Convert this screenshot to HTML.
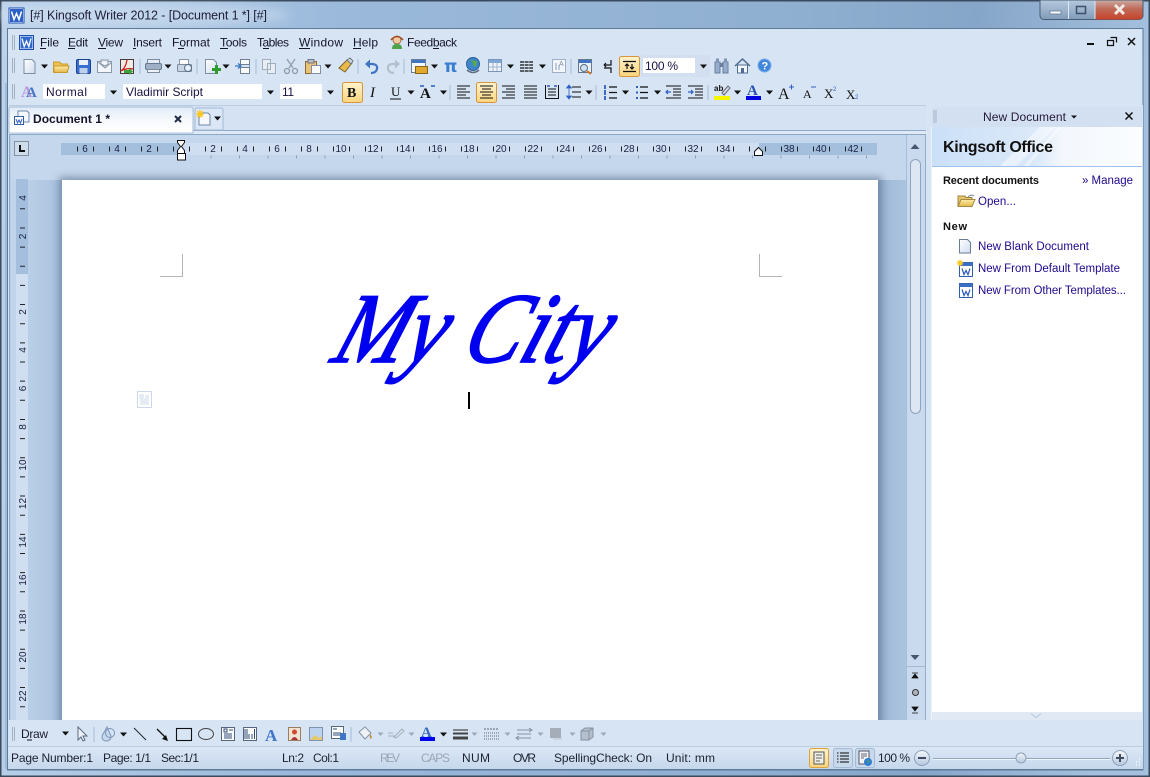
<!DOCTYPE html>
<html><head><meta charset="utf-8"><title>Kingsoft Writer 2012</title>
<style>
html,body{margin:0;padding:0;width:1150px;height:777px;overflow:hidden;background:#9bb9d9}
svg{display:block;position:absolute;left:0;top:0}
text{font-family:"Liberation Sans",sans-serif;font-size:12px;fill:#14142c}
.r{font-size:10px;fill:#1a2040;text-anchor:middle}
.l{fill:#1c0a8c}
.b{font-weight:bold;fill:#000}
.s{fill:#1c2030}
.g{fill:#9aa6b8}
.sep{stroke:#a9bcd4;stroke-width:1}
</style></head><body>
<svg width="1150" height="777" viewBox="0 0 1150 777" xmlns="http://www.w3.org/2000/svg">
<defs>
<linearGradient id="fr" x1="0" x2="1" y1="0" y2="0.05"><stop offset="0" stop-color="#bcd2ea"/><stop offset=".3" stop-color="#9ab9db"/><stop offset=".7" stop-color="#8fafd1"/><stop offset=".85" stop-color="#86a6c9"/><stop offset="1" stop-color="#a4c0de"/></linearGradient>
<linearGradient id="dl" x1="0" x2="1" y1="0" y2="0"><stop offset="0" stop-color="#c3d6ec"/><stop offset=".75" stop-color="#b0c7e2"/><stop offset="1" stop-color="#a6bfdc"/></linearGradient>
<linearGradient id="dr" x1="0" x2="1" y1="0" y2="0"><stop offset="0" stop-color="#9ab4d2"/><stop offset=".5" stop-color="#a5bedb"/><stop offset="1" stop-color="#aac3df"/></linearGradient>
<linearGradient id="hl" x1="0" x2="0" y1="0" y2="1"><stop offset="0" stop-color="#fff3cf"/><stop offset="1" stop-color="#fcd57e"/></linearGradient>
<linearGradient id="tab" x1="0" x2="0" y1="0" y2="1"><stop offset="0" stop-color="#dfeaf8"/><stop offset=".5" stop-color="#f6f9fd"/><stop offset="1" stop-color="#fff"/></linearGradient>
<linearGradient id="pt" x1="0" x2="1" y1="0" y2="0"><stop offset="0" stop-color="#cbe0f8"/><stop offset=".5" stop-color="#dbe9f9"/><stop offset=".62" stop-color="#f3f7fd"/><stop offset="1" stop-color="#fbfdff"/></linearGradient>
<linearGradient id="st" x1="0" x2="0" y1="0" y2="1"><stop offset="0" stop-color="#dbe7f5"/><stop offset="1" stop-color="#c5d7ec"/></linearGradient>
<linearGradient id="min" x1="0" x2="0" y1="0" y2="1"><stop offset="0" stop-color="#b4c8dd"/><stop offset=".5" stop-color="#9cb3cc"/><stop offset="1" stop-color="#7f9ab8"/></linearGradient>
<linearGradient id="cl" x1="0" x2="0" y1="0" y2="1"><stop offset="0" stop-color="#c9a8a0"/><stop offset=".45" stop-color="#c06a58"/><stop offset="1" stop-color="#c8422a"/></linearGradient>
<linearGradient id="fo" x1="0" x2="0" y1="0" y2="1"><stop offset="0" stop-color="#fdeeaa"/><stop offset="1" stop-color="#e4b545"/></linearGradient>
<linearGradient id="pa" x1="0" x2="1" y1="0" y2="1"><stop offset="0" stop-color="#fff"/><stop offset="1" stop-color="#cfdcef"/></linearGradient>
<linearGradient id="kn" x1="0" x2="0" y1="0" y2="1"><stop offset="0" stop-color="#f4f7fb"/><stop offset="1" stop-color="#b6c8de"/></linearGradient>
<filter id="bl" x="-10%" y="-10%" width="120%" height="120%"><feGaussianBlur stdDeviation="5"/></filter>
<filter id="bs" x="-5%" y="-5%" width="110%" height="110%"><feGaussianBlur stdDeviation="4"/></filter>
<path id="ar" d="M-3.5 -1.5h7l-3.500 4z" fill="#111"/>
<path id="arg" d="M-3 -1.500h6l-3 3.500z" fill="#9aa9bc"/>
<g id="wd"><rect x="0" y="0" width="13" height="14" fill="#fff" stroke="#2f5fa8"/><rect x="0" y="0" width="13" height="3.500" fill="#3a70c4"/><path d="M2.500 6l2 6 2-4 2 4 2-6" fill="none" stroke="#2a5cc0" stroke-width="1.200"/></g>
</defs>

<!-- frame -->
<rect width="1150" height="777" fill="url(#fr)"/>
<rect x="0" y="0" width="1150" height="1.500" fill="#3b4a5c"/>
<rect x="0" y="0" width="1.500" height="777" fill="#3b4a5c"/>
<rect x="1148.500" y="0" width="1.500" height="777" fill="#3b4a5c"/>
<rect x="0" y="775.500" width="1150" height="1.500" fill="#3b4a5c"/>
<ellipse cx="140" cy="15" rx="150" ry="12" fill="#dbe8f5" opacity=".45" filter="url(#bl)"/>

<!-- title -->
<rect x="9" y="8" width="15" height="15" fill="#fff" stroke="#1c4fb0"/>
<rect x="10" y="9" width="13" height="13" fill="#2a60c8"/>
<path d="M11.500 11.500l2.500 8 2.500-6 2.500 6 2.500-8" fill="none" stroke="#fff" stroke-width="1.500"/>
<text x="30" y="19.500" style="font-size:12.500px;fill:#20203a" textLength="237">[#] Kingsoft Writer 2012 - [Document 1 *] [#]</text>

<!-- window buttons -->
<g>
<path d="M1040 0h103v15a4 4 0 0 1-4 4.500h-95a4 4 0 0 1-4-4.500z" fill="url(#min)" stroke="#4a5d72"/>
<path d="M1095.500 .5h47v15a4 4 0 0 1-4 4h-43z" fill="url(#cl)"/>
<path d="M1068.500 1v18M1095 1v18" stroke="#dfe8f2" stroke-width="1"/>
<rect x="1050" y="11" width="11" height="3" fill="#f3f6fa" stroke="#5f7488" stroke-width=".7"/>
<rect x="1076.500" y="6.500" width="9" height="7" fill="none" stroke="#3d5068" stroke-width="1.500"/>
<path d="M1115 5l9 9M1124 5l-9 9" stroke="#f0e8e4" stroke-width="3"/>
</g>

<!-- client -->
<rect x="7.500" y="28.500" width="1135.500" height="741.500" fill="#d6e4f4" stroke="#5f7a96"/>
<rect x="5" y="83" width="2" height="686" fill="#8cadd2" opacity=".6"/>

<!-- menu row -->
<path d="M12.500 35v15M14.500 35v15M12.500 58v15M14.500 58v15M12.500 84v15M14.500 84v15" stroke="#a2b2c6" stroke-width="1"/>
<rect x="19.500" y="35.500" width="14" height="14" fill="#fff" stroke="#1c4fb0"/>
<rect x="20.500" y="36.500" width="12" height="12" fill="#3168cc"/>
<path d="M22 38.500l2.200 8 2.300-5.500 2.300 5.500 2.200-8" fill="none" stroke="#fff" stroke-width="1.300"/>
<g>
<text x="40" y="46.500" textLength="19">File</text>
<text x="68" y="46.500" textLength="20">Edit</text>
<text x="98" y="46.500" textLength="25">View</text>
<text x="133" y="46.500" textLength="29">Insert</text>
<text x="172" y="46.500" textLength="38">Format</text>
<text x="220" y="46.500" textLength="27">Tools</text>
<text x="257" y="46.500" textLength="32">Tables</text>
<text x="299" y="46.500" textLength="44">Window</text>
<text x="353" y="46.500" textLength="25">Help</text>
<text x="407" y="46.500" textLength="50">Feedback</text>
</g>
<path d="M40 48.500h6M68 48.500h7M98 48.500h8M133 48.500h3M178 48.500h6M220 48.500h8M263 48.500h6M299 48.500h11M353 48.500h8M433 48.500h6" stroke="#14142c"/>
<!-- feedback icon -->
<circle cx="397" cy="40" r="4" fill="#f3c9a0" stroke="#8a5a30" stroke-width=".8"/>
<path d="M392 49c0-4 2-5 5-5s5 1 5 5z" fill="#4fa34a"/><path d="M391 40q6-7 12 0" fill="none" stroke="#a54a20" stroke-width="1.500"/>
<!-- MDI controls -->
<rect x="1087" y="43" width="7" height="2" fill="#111"/>
<path d="M1110.500 37.500h6v5M1107.500 40.500h6v5h-6z" fill="none" stroke="#111" stroke-width="1.200"/>
<path d="M1128 38l7 7M1135 38l-7 7" stroke="#111" stroke-width="1.500"/>

<!-- row 1 -->
<g id="r1">
<path d="M24 59.500h8l3 3v11h-11z" fill="url(#pa)" stroke="#7e8ea4"/>
<use href="#ar" x="44.500" y="66"/>
<path d="M53.500 62h6l2 2h6v8h-14z" fill="#edc14f" stroke="#c99a2d"/><path d="M54 66h15l-2 6.500h-13z" fill="url(#fo)" stroke="#c99a2d"/>
<rect x="76.500" y="59.500" width="14" height="14" rx="1.500" fill="#3a6ed0" stroke="#1c3f8e"/><rect x="79" y="60" width="9" height="5" fill="#e8eff9"/><rect x="79.500" y="68" width="8" height="5.500" fill="#bfd0ea"/>
<rect x="97.500" y="61.500" width="14" height="11" fill="#f3f6fa" stroke="#8998ab"/><path d="M98 62l7 6 7-6M101 60h7v4l-3 2-4-2z" fill="#e4eaf2" stroke="#8998ab"/>
<rect x="120.500" y="59.500" width="13" height="14" fill="#f0ece4" stroke="#4a3c3c"/><path d="M127 60c-1 6-3 9-6 11 3-2 8-3 12-2" fill="none" stroke="#d01818" stroke-width="1.200"/><path d="M124 70h5v-2l4 3.500-4 3.500v-2h-5z" fill="#39a33a"/>
<path class="sep" d="M140 59v15"/>
<rect x="147.500" y="59.500" width="12" height="4" fill="#e6ecf3" stroke="#7d8ca0"/><rect x="145.500" y="63.500" width="16" height="6" rx="1.500" fill="#9fb0c6" stroke="#667990"/><rect x="147.500" y="69.500" width="12" height="3" fill="#eef2f7" stroke="#7d8ca0"/>
<use href="#ar" x="168" y="66"/>
<rect x="179.500" y="59.500" width="9" height="6" fill="#fff" stroke="#8495aa"/><rect x="177.500" y="64.500" width="14" height="7" rx="1" fill="#c9d5e4" stroke="#7a8ba0"/><circle cx="188" cy="68" r="3.500" fill="#e6f0fb" stroke="#5b6f88"/>
<path class="sep" d="M197 59v15"/>
<path d="M205.500 59.500h8l3 3v11h-11z" fill="url(#pa)" stroke="#7e8ea4"/><path d="M212 68h3v-3h3v3h3v3h-3v3h-3v-3h-3z" fill="#2f9b2f"/>
<use href="#ar" x="226" y="66"/>
<path d="M240.500 59.500h9v5h-9zM240.500 67.500h9v6h-9z" fill="#fbfcfe" stroke="#6e7e94"/><path d="M235 66h6M238 63.500l3 2.500-3 2.500M250 66h-1" fill="none" stroke="#3a78c8" stroke-width="1.300"/>
<path class="sep" d="M256 59v15"/>
<path d="M262.500 59.500h8v10h-8zM267.500 63.500h8v10h-8z" fill="#e8edf4" stroke="#a3aebd"/>
<path d="M287 59l6 9M295 59l-6 9" stroke="#98a3b2" stroke-width="1.500"/><circle cx="287" cy="71" r="2.500" fill="none" stroke="#8c99aa" stroke-width="1.300"/><circle cx="295" cy="71" r="2.500" fill="none" stroke="#8c99aa" stroke-width="1.300"/>
<rect x="305.500" y="61.500" width="11" height="12" fill="#e8c277" stroke="#8e6c30"/><rect x="308" y="59.500" width="6" height="3.500" fill="#b7bec8" stroke="#6d7786"/><rect x="311.500" y="65.500" width="9" height="8" fill="#f8fafc" stroke="#7e8ea4"/>
<use href="#ar" x="328" y="66"/>
<path d="M339 68l8-8 5 3-7 9z" fill="#e8b84a" stroke="#7d6628"/><path d="M347 60l3-2 3 3-2 3z" fill="#cfd6de" stroke="#6c7684"/>
<path class="sep" d="M358 59v15"/>
<path d="M367 64h6q5 1 4 5t-6 4" fill="none" stroke="#3f74c4" stroke-width="2.200"/><path d="M370 59.500v9l-5-4.500z" fill="#3f74c4"/>
<path d="M398 64h-6q-5 1-4 5t6 4" fill="none" stroke="#b4bfcc" stroke-width="2.200"/><path d="M395 59.500v9l5-4.500z" fill="#b4bfcc"/>
<path class="sep" d="M404 59v15"/>
<rect x="411.500" y="59.500" width="14" height="13" fill="#f4f7fb" stroke="#6b7f98"/><rect x="412" y="60" width="13" height="3" fill="#3e74c2"/><rect x="415.500" y="66.500" width="12" height="7" fill="#e0a82e" stroke="#8a6416"/>
<use href="#ar" x="434.500" y="66"/>
<text x="444" y="72" style="font-family:'DejaVu Sans',sans-serif;font-size:17px;font-weight:bold;fill:#3a7ed0" textLength="14">π</text>
<circle cx="473" cy="64" r="6.500" fill="#3d86c9" stroke="#2c5e94"/><path d="M469 60q4 1 4 4t3 2l1-5" fill="#5aa84a"/><path d="M467 70q6 5 12 0" fill="none" stroke="#5d6c80" stroke-width="1.500"/>
<rect x="488.500" y="59.500" width="13" height="12" fill="#eef3fa" stroke="#7c94b5"/><rect x="489" y="60" width="12" height="3" fill="#7fa8da"/><path d="M493 63v8M497 63v8M489 67h12" stroke="#9eb4d0"/>
<use href="#ar" x="510.500" y="66"/>
<path d="M520 62h13M520 65h13M520 68h13M520 71h13" stroke="#111" stroke-width="1.300" stroke-dasharray="4 .6"/>
<use href="#ar" x="542.500" y="66"/>
<rect x="552.500" y="59.500" width="13" height="13" fill="#f3f6fb" stroke="#9fb0c6"/><path d="M556 63v7M559 65v5" stroke="#8aa0be"/><text x="559" y="66" style="font-size:7px;fill:#7d8da2">A</text>
<path class="sep" d="M571 59v15"/>
<rect x="578.500" y="59.500" width="13" height="13" fill="#eaf0f8" stroke="#64788f"/><rect x="579" y="60" width="12" height="3" fill="#3e74c2"/><circle cx="584" cy="68" r="3.500" fill="#cfe2f1" stroke="#5b6f88"/><path d="M587 71l4 3" stroke="#d9761d" stroke-width="2"/>
<path d="M611 60v5h-7M604 65l2-2M604 65l2 2M604 68h7v5M611 68l-2 0" fill="none" stroke="#111" stroke-width="1.200"/>
<rect x="619.500" y="56.500" width="20" height="20" rx="2" fill="url(#hl)" stroke="#d8953a"/>
<path d="M623 61.500h13M623 71.500h13M627 64v5M632 64v5M625 66l2-2 2 2M630 67l2 2 2-2" fill="none" stroke="#111" stroke-width="1.200"/>
<rect x="641" y="55" width="69" height="22" fill="#d3dff0"/>
<rect x="643" y="58" width="52" height="15" fill="#fff"/>
<text x="645" y="70" textLength="33" style="fill:#1a1240">100 %</text>
<use href="#ar" x="703.500" y="66"/>
<path d="M715 62h5v11h-5zM723 62h5v11h-5z" fill="#97add0" stroke="#697e9c"/><rect x="716" y="58.500" width="3" height="4" fill="#7e95b8"/><rect x="724" y="58.500" width="3" height="4" fill="#7e95b8"/><rect x="720" y="63" width="3" height="4" fill="#6b7f9c"/>
<path d="M735 66l7.500-7 7.500 7" fill="none" stroke="#4f6c92" stroke-width="1.500"/><path d="M737.500 65v8h10v-8z" fill="#f3f6fa" stroke="#4f6c92"/><rect x="741" y="68" width="3" height="5" fill="#4f6c92"/>
<circle cx="764.500" cy="65.500" r="6.500" fill="#3f86dc" stroke="#7eaee8"/><text x="761.500" y="69.500" style="font-size:11px;font-weight:bold;fill:#fff">?</text>
</g>

<!-- row 2 -->
<g id="r2">
<text x="21" y="97" style="font-family:'Liberation Serif',serif;font-size:16px;font-weight:bold;fill:#b89ad8">A</text><text x="26" y="97" style="font-family:'Liberation Serif',serif;font-size:15px;font-weight:bold;fill:#4a78c8">A</text>
<rect x="43" y="84" width="62" height="15" fill="#fff"/>
<text x="46" y="96" textLength="41" style="fill:#1a1240">Normal</text>
<use href="#ar" x="113.500" y="92"/>
<rect x="123" y="84" width="139" height="15" fill="#fff"/>
<text x="126" y="96" textLength="77" style="fill:#1a1240">Vladimir Script</text>
<use href="#ar" x="270.500" y="92"/>
<rect x="280" y="84" width="42" height="15" fill="#fff"/>
<text x="282" y="96" textLength="12" style="fill:#1a1240">11</text>
<use href="#ar" x="330.500" y="92"/>
<rect x="342.500" y="82.500" width="20" height="20" rx="2" fill="url(#hl)" stroke="#d8953a"/>
<text x="347" y="97" style="font-family:'Liberation Serif',serif;font-size:14px;font-weight:bold;fill:#111">B</text>
<text x="370" y="97" style="font-family:'Liberation Serif',serif;font-size:15px;font-style:italic;fill:#111">I</text>
<text x="391" y="96" style="font-family:'Liberation Serif',serif;font-size:13px;fill:#111">U</text><path d="M390 99h11" stroke="#111"/>
<use href="#ar" x="411" y="92"/>
<text x="420" y="98" style="font-family:'Liberation Serif',serif;font-size:15px;font-weight:bold;fill:#111">A</text><path d="M420 86h4M431 86h4" stroke="#2d5fbf" stroke-width="1.500"/>
<use href="#ar" x="443.500" y="92"/>
<path class="sep" d="M450 85v15"/>
<path d="M457 86h13M457 89h9M457 92h13M457 95h9M457 98h13" stroke="#111"/>
<rect x="476.500" y="82.500" width="20" height="20" rx="2" fill="url(#hl)" stroke="#d8953a"/>
<path d="M480 86h13M482 89h9M480 92h13M482 95h9M480 98h13" stroke="#111"/>
<path d="M502 86h13M506 89h9M502 92h13M506 95h9M502 98h13" stroke="#111"/>
<path d="M524 86h13M524 89h13M524 92h13M524 95h13M524 98h13" stroke="#111"/>
<path d="M545.500 85v14M558.500 85v14M548 89h8M548 92h8M548 95h8M545 98.500h14" stroke="#111"/><path d="M547 86h3M554 86h3" stroke="#2d5fbf" stroke-width="1.500"/>
<path d="M572 87h9M572 92h9M572 97h9" stroke="#111"/><path d="M569 85l-2.500 3h5zM569 99l-2.500-3h5zM569 88v8" fill="#2d5fbf" stroke="#2d5fbf" stroke-width=".8"/>
<use href="#ar" x="589" y="92"/>
<path class="sep" d="M596 85v15"/>
<path d="M609 87h8M609 92.500h8M609 98h8" stroke="#111" stroke-width="1.200"/><path d="M605 85v4M605 90v5M605 96v4" stroke="#2d5fbf" stroke-width="1.800"/>
<use href="#ar" x="625.500" y="92"/>
<path d="M640 87h8M640 92.500h8M640 98h8" stroke="#111" stroke-width="1.200"/><path d="M636 87h2M636 92.500h2M636 98h2" stroke="#2d5fbf" stroke-width="2"/>
<use href="#ar" x="657.500" y="92"/>
<path d="M666 86h15M673 89h8M673 92h8M673 95h8M666 98h15" stroke="#111"/><path d="M671 92h-5M668 90l-2 2 2 2" fill="none" stroke="#2d5fbf" stroke-width="1.200"/>
<path d="M688 86h15M695 89h8M695 92h8M695 95h8M688 98h15" stroke="#111"/><path d="M688 92h5M691 90l2 2-2 2" fill="none" stroke="#2d5fbf" stroke-width="1.200"/>
<path class="sep" d="M708 85v15"/>
<text x="714" y="91" style="font-size:8px;font-weight:bold;fill:#111">ab</text>
<path d="M722 93l6-7 2 2-6 7z" fill="#d8dfe8" stroke="#667"/>
<rect x="714" y="96" width="16" height="4" fill="#f5f500"/>
<use href="#ar" x="737.500" y="92"/>
<text x="747" y="95" style="font-family:'Liberation Serif',serif;font-size:15px;font-weight:bold;fill:#2a4fb0">A</text><rect x="746" y="96" width="15" height="4" fill="#0000e0"/>
<use href="#ar" x="769.500" y="92"/>
<text x="778" y="99" style="font-family:'Liberation Serif',serif;font-size:16px;fill:#111">A</text><path d="M789 87h5M791.500 84.500v5" stroke="#2d5fbf"/>
<text x="803" y="98" style="font-family:'Liberation Serif',serif;font-size:12px;fill:#111">A</text><path d="M811 87h5" stroke="#2d5fbf"/>
<text x="824" y="98" style="font-family:'Liberation Serif',serif;font-size:13px;fill:#111">X</text><text x="833" y="91" style="font-size:6px;fill:#2d5fbf">2</text>
<text x="846" y="99" style="font-family:'Liberation Serif',serif;font-size:13px;fill:#111">X</text><text x="855" y="99" style="font-size:6px;fill:#2d5fbf">2</text>
</g>

<!-- tab bar -->
<rect x="9" y="105" width="917" height="1" fill="#bccde2"/>
<rect x="9" y="106" width="917" height="24" fill="#d4e2f3"/>
<rect x="9" y="130" width="917" height="1" fill="#8ea9c7"/>
<rect x="9" y="134" width="917" height="1" fill="#8ea9c7"/>
<rect x="9" y="131" width="917" height="3" fill="#dfe9f6"/>
<path d="M9 133v-24a2 2 0 0 1 2-2h180a2 2 0 0 1 2 2v24z" fill="url(#tab)" stroke="#a9bfd9"/>
<path d="M18 111h9l2 2v9h-11z" fill="#f4f7fb" stroke="#6e88aa"/><rect x="14.500" y="116.500" width="9" height="8" fill="#fff" stroke="#2f5fa8"/><path d="M16 119l1.500 4 1.500-3 1.500 3 1.500-4" fill="none" stroke="#2a5cc0"/>
<text x="33" y="123" textLength="77" style="font-size:12px;font-weight:bold;fill:#14142c">Document 1 *</text>
<path d="M175 116l6 6M181 116l-6 6" stroke="#1f2c44" stroke-width="2"/>
<path d="M195 130v-20a2 2 0 0 1 2-2h24a2 2 0 0 1 2 2v20z" fill="#dbe7f6" stroke="#a3b9d3"/>
<path d="M199 113h9l2 2v10h-11z" fill="#f6f8fb" stroke="#6e88aa"/><circle cx="200" cy="114" r="3" fill="#ffd640"/><path d="M196 114h8M200 110v8M197 111l6 6M203 111l-6 6" stroke="#f7c520"/>
<use href="#ar" x="217.500" y="118"/>

<!-- document area -->
<rect x="9" y="135" width="53" height="585" fill="url(#dl)"/>
<rect x="878" y="135" width="28" height="585" fill="url(#dr)"/>
<rect x="9" y="135" width="897" height="45" fill="#c5d7ec"/>
<rect x="9" y="135" width="1.200" height="585" fill="#8ea9c7"/>
<rect x="59" y="177" width="823" height="560" fill="#4f6a8a" opacity=".6" filter="url(#bs)"/>
<rect x="62" y="180" width="816" height="540" fill="#fff"/>

<!-- rulers -->
<rect x="14.500" y="141.500" width="14" height="14" fill="#cfdcec" stroke="#85909e"/>
<path d="M20 145v6h5" fill="none" stroke="#111" stroke-width="2"/>
<rect x="61" y="143" width="816" height="12" fill="#cfdff1"/>
<rect x="61" y="143" width="120" height="12" fill="#a3bfdd"/>
<rect x="759" y="143" width="118" height="12" fill="#a3bfdd"/>
<path d="M77 149H870" stroke="#222" stroke-width="5" stroke-dasharray="1 15" fill="none"/>
<path d="M181 157H878" stroke="#8fa0b4" stroke-width="3" stroke-dasharray="1 27.500" fill="none" stroke-dashoffset="-1"/>
<g>
<text class="r" x="85" y="152">6</text><text class="r" x="117" y="152">4</text><text class="r" x="149" y="152">2</text>
<text class="r" x="213" y="152">2</text><text class="r" x="245" y="152">4</text><text class="r" x="277" y="152">6</text><text class="r" x="309" y="152">8</text>
<text class="r" x="341" y="152">10</text><text class="r" x="373" y="152">12</text><text class="r" x="405" y="152">14</text><text class="r" x="437" y="152">16</text><text class="r" x="469" y="152">18</text><text class="r" x="501" y="152">20</text><text class="r" x="533" y="152">22</text><text class="r" x="565" y="152">24</text><text class="r" x="597" y="152">26</text><text class="r" x="629" y="152">28</text><text class="r" x="661" y="152">30</text><text class="r" x="693" y="152">32</text><text class="r" x="725" y="152">34</text><text class="r" x="789" y="152">38</text><text class="r" x="821" y="152">40</text><text class="r" x="853" y="152">42</text>
</g>
<path d="M177.500 140.500h7v2l-3 4 3 4v3h-7v-3l3-4-3-4z" fill="#fff" stroke="#111"/>
<rect x="177.500" y="153.500" width="8" height="6.500" fill="#fff" stroke="#111"/>
<path d="M754.500 155.500v-4l4-4 4 4v4z" fill="#fff" stroke="#111"/>

<rect x="16" y="179" width="12" height="541" fill="#cfdff1"/>
<rect x="16" y="179" width="12" height="95" fill="#a3bfdd"/>
<path d="M22.500 208.300V720" stroke="#222" stroke-width="5" stroke-dasharray="1 18.150" fill="none"/>
<g>
<text class="r" transform="translate(26,198) rotate(-90)">4</text>
<text class="r" transform="translate(26,236.500) rotate(-90)">2</text>
<text class="r" transform="translate(26,312) rotate(-90)">2</text>
<text class="r" transform="translate(26,350) rotate(-90)">4</text>
<text class="r" transform="translate(26,388.500) rotate(-90)">6</text>
<text class="r" transform="translate(26,427) rotate(-90)">8</text>
<text class="r" transform="translate(26,465) rotate(-90)">10</text>
<text class="r" transform="translate(26,503.500) rotate(-90)">12</text>
<text class="r" transform="translate(26,542) rotate(-90)">14</text>
<text class="r" transform="translate(26,580) rotate(-90)">16</text>
<text class="r" transform="translate(26,619) rotate(-90)">18</text>
<text class="r" transform="translate(26,657) rotate(-90)">20</text>
<text class="r" transform="translate(26,696) rotate(-90)">22</text>
</g>

<!-- page content -->
<path d="M182.500 254v22.500H160M759.500 254v22.500H782" fill="none" stroke="#b3b3b3"/>
<rect x="137.500" y="391.500" width="14" height="16" fill="#fff" stroke="#cdd8ea"/>
<path d="M140 395h3v3h-3zM145 396h4M145 398h4M140 400h9M140 402h9M140 404h9" stroke="#cdd8ea" fill="none"/>
<text transform="translate(329,362) skewX(-20)" textLength="272" lengthAdjust="spacingAndGlyphs" style="font-family:'Liberation Serif',serif;font-style:italic;font-size:100px;fill:#0000f0;stroke:#0000f0;stroke-width:1.800">My City</text>
<rect x="468" y="392" width="2" height="17" fill="#000"/>

<!-- scrollbar -->
<rect x="906" y="135" width="20" height="585" fill="#c9daee"/>
<rect x="906" y="135" width="1" height="585" fill="#a8bdd7"/>
<rect x="925" y="135" width="1" height="585" fill="#93aecd"/>
<path d="M910.500 149l4.500-5 4.500 5z" fill="#46566f"/>
<rect x="910.500" y="159.500" width="10" height="254" rx="5" fill="#dde7f3" stroke="#8fa5bf"/>
<path d="M910.500 655l4.500 5 4.500-5z" fill="#46566f"/>
<path d="M906 666.500h20" stroke="#a3b9d3"/>
<path d="M912 678h6l-3-4zM912 673h6" fill="#111" stroke="#111" stroke-width=".8"/>
<circle cx="915.500" cy="692.500" r="3" fill="#b0b4ba" stroke="#333" stroke-width="1"/>
<path d="M912 707h6l-3 4zM912 713h6" fill="#111" stroke="#111" stroke-width=".8"/>

<!-- right panel -->
<rect x="926" y="105" width="217" height="615" fill="#d6e4f4"/>
<rect x="932" y="107" width="210" height="20" fill="#d3e0f1"/>
<path d="M934 110v13M936 110v13" stroke="#a2b2c6"/>
<text x="983" y="121" textLength="83" style="fill:#241838">New Document</text>
<path d="M1071 115.500h6l-3 3z" fill="#111"/>
<path d="M1125.500 112.500l7 7M1132.500 112.500l-7 7" stroke="#111" stroke-width="1.500"/>
<rect x="931.500" y="127" width="210.500" height="593" fill="#fff"/>
<rect x="932" y="127" width="210" height="39" fill="url(#pt)"/>
<path d="M1000 166l40-39h16l-40 39zM1024 166l34-39h4l-34 39z" fill="#fff" opacity=".45"/>
<rect x="932" y="166" width="210" height="1" fill="#9cc3ec"/>
<text x="943" y="152" textLength="110" style="font-size:16px;font-weight:bold;fill:#111">Kingsoft Office</text>
<text x="943" y="184" textLength="96" style="font-size:11px;font-weight:bold;fill:#111">Recent documents</text>
<text x="1082" y="184" textLength="51" style="font-size:11.500px" class="l">» Manage</text>
<path d="M958 196h7l1 1.500h6v9h-14z" fill="#e8c566" stroke="#9c8240"/><path d="M958 206.500l3-7h14l-3 7z" fill="url(#fo)" stroke="#a38a45"/>
<path d="M968 197q3-3 6-1" fill="none" stroke="#7c8ca0"/>
<text x="978" y="205" textLength="38" style="font-size:11.500px" class="l">Open...</text>
<text x="943" y="230" textLength="24" style="font-size:11px;font-weight:bold;fill:#111">New</text>
<path d="M959.500 239.500h8l3 3v10.500h-11z" fill="url(#pa)" stroke="#6a7d96"/>
<text x="978" y="250" textLength="111" style="font-size:11.500px" class="l">New Blank Document</text>
<use href="#wd" x="959.500" y="262.500"/>
<circle cx="960" cy="263" r="2.500" fill="#ffd640"/><path d="M956.500 263h7M960 259.500v7M957.500 260.500l5 5M962.500 260.500l-5 5" stroke="#f7c520" stroke-width=".8"/>
<text x="978" y="272" textLength="142" style="font-size:11.500px" class="l">New From Default Template</text>
<use href="#wd" x="959.500" y="283.500"/>
<text x="978" y="294" textLength="148" style="font-size:11.500px" class="l">New From Other Templates...</text>
<rect x="932" y="712" width="210" height="8" fill="#e1e9f5"/>
<path d="M1031 713.500l5 4 5-4" fill="none" stroke="#b6c6dc"/>

<!-- draw toolbar -->
<rect x="8" y="720" width="1135" height="27" fill="#d6e4f4"/>
<rect x="8" y="746.500" width="1135" height="1" fill="#9db3cc"/>
<path d="M12.500 727v14M14.500 727v14" stroke="#a2b2c6"/>
<text x="21" y="738" textLength="27" style="fill:#1c1c2c">Draw</text><path d="M27 740h5" stroke="#14142c"/>
<use href="#ar" x="65.500" y="733"/>
<path d="M78 727v13l3-3 2 4 2-1-2-4h4z" fill="#eef2f7" stroke="#5b6b80"/>
<path class="sep" d="M94 727v15"/>
<path d="M107 727l-5 9q0 5 4 5 5 0 5-5z" fill="#c8d8ec" stroke="#7c96b8"/><circle cx="110" cy="733" r="4.500" fill="none" stroke="#7c96b8"/>
<use href="#ar" x="123.500" y="734"/>
<path d="M134 728l12 12" stroke="#222"/>
<path d="M157 729l9 9" stroke="#111" stroke-width="1.300"/><path d="M168 741l-6-2 4-4z" fill="#111"/>
<rect x="176.500" y="728.500" width="15" height="12" fill="none" stroke="#111" stroke-width="1.100"/>
<ellipse cx="206" cy="734" rx="7.500" ry="5.500" fill="none" stroke="#444"/>
<rect x="221.500" y="727.500" width="13" height="13" fill="#fff" stroke="#55677e"/><path d="M224 729h3v3h-3zM229 730h4M224 734h8M224 736h8M224 738h8" stroke="#2e4a76" fill="none"/>
<rect x="243.500" y="727.500" width="13" height="13" fill="#fff" stroke="#55677e"/><path d="M245 729v10M247 729v10M254.500 729v10M252 734v5M249 734v5" stroke="#2e4a76" fill="none"/>
<text x="265" y="741" style="font-family:'Liberation Serif',serif;font-size:17px;font-weight:bold;fill:#3f76c8">A</text>
<rect x="288.500" y="727.500" width="12" height="13" fill="#f1e3d3" stroke="#9b7e5e"/><circle cx="294.500" cy="732" r="2.500" fill="#d04a30"/><path d="M291 740q3.500-6 7 0z" fill="#a33"/>
<rect x="309.500" y="727.500" width="13" height="13" fill="#bcd3ef" stroke="#7d93b0"/><path d="M310 740l5-5 4 3 3-2v4z" fill="#e6c76a"/>
<rect x="331.500" y="726.500" width="12" height="12" fill="#fff" stroke="#55677e"/><path d="M333 729h4M333 733h8M333 735h8" stroke="#2e4a76"/><rect x="340" y="733" width="6" height="7" fill="#3f76c8"/>
<path class="sep" d="M351 727v15"/>
<path d="M359 732l6-5 6 6-6 6z" fill="#eef2f7" stroke="#8592a4"/><path d="M370 734q3 3 1 5-2-2-1-5" fill="#c88e3c"/>
<use href="#arg" x="380.500" y="734"/>
<path d="M388 736h8M388 733h5M394 737l8-8 2 2-8 7z" fill="#dfe6ee" stroke="#a3afbe"/>
<use href="#arg" x="411.500" y="734"/>
<text x="421" y="737" style="font-family:'Liberation Serif',serif;font-size:15px;font-weight:bold;fill:#3a68c0">A</text><rect x="420" y="737" width="15" height="4" fill="#0000f0"/>
<use href="#ar" x="443.500" y="734"/>
<path d="M453 730h15" stroke="#444" stroke-width="1.200"/><path d="M453 733.500h15" stroke="#444" stroke-width="2"/><path d="M453 738h15" stroke="#444" stroke-width="3"/>
<use href="#arg" x="474.500" y="734"/>
<path d="M484 729h15" stroke="#667" stroke-dasharray="2 1"/><path d="M484 733h15M484 736h15M484 739h15" stroke="#667" stroke-dasharray="1 1"/>
<use href="#arg" x="507.500" y="734"/>
<path d="M517 730h14M517 734h14M517 738h14M529 728l3 2-3 2M519 736l-3 2 3 2" fill="none" stroke="#8592a4"/>
<use href="#arg" x="540.500" y="734"/>
<rect x="550" y="728" width="11" height="10" fill="#a4adb8"/><rect x="553" y="738" width="9" height="2" fill="#cdd5e0"/>
<use href="#arg" x="572.500" y="734"/>
<path d="M581 731l4-3h8v9l-4 3h-8z" fill="#b6c0cd" stroke="#8592a4"/><path d="M581 731h8v9M589 731l4-3" fill="none" stroke="#8592a4"/>
<use href="#arg" x="603.500" y="734"/>

<!-- status bar -->
<rect x="8" y="747" width="1135" height="23" fill="url(#st)"/>
<rect x="8" y="769" width="1135" height="1" fill="#5f7a96"/>
<g>
<text x="11" y="762" class="s" textLength="82">Page Number:1</text>
<text x="103" y="762" class="s" textLength="48">Page: 1/1</text>
<text x="161" y="762" class="s" textLength="38">Sec:1/1</text>
<text x="282" y="762" class="s" textLength="22">Ln:2</text>
<text x="313" y="762" class="s" textLength="26">Col:1</text>
<text x="380" y="762" class="g" textLength="20">REV</text>
<text x="421" y="762" class="g" textLength="29">CAPS</text>
<text x="462" y="762" class="s" textLength="28">NUM</text>
<text x="513" y="762" class="s" textLength="23">OVR</text>
<text x="554" y="762" class="s" textLength="98">SpellingCheck: On</text>
<text x="666" y="762" class="s" textLength="49">Unit: mm</text>
</g>
<rect x="809.500" y="748.500" width="19" height="19" rx="2" fill="url(#hl)" stroke="#e0a33a"/>
<rect x="814" y="752" width="10" height="12" fill="#efefe6" stroke="#555"/><path d="M816 755h6M816 758h6M816 761h4" stroke="#666"/>
<rect x="833.500" y="748.500" width="19" height="19" rx="2" fill="#c8d9ec" stroke="#a5bbd5"/>
<path d="M840 753h9M840 756h9M840 759h9M840 762h9M837 753h1.500M837 756h1.500M837 759h1.500M837 762h1.500" stroke="#333" stroke-width="1.200"/>
<rect x="855.500" y="748.500" width="19" height="19" rx="2" fill="#c8d9ec" stroke="#a5bbd5"/>
<rect x="859" y="751" width="10" height="13" fill="#f2f5f8" stroke="#556"/><path d="M861 754h6M861 756h6M861 758h3" stroke="#667"/><circle cx="868" cy="762" r="4" fill="#2f7fd0"/><path d="M866 760q2 1 2 3l2-2" fill="#5aa84a"/>
<text x="878" y="762" class="s" textLength="32">100 %</text>
<circle cx="922" cy="758" r="7.500" fill="url(#kn)" stroke="#8ba0b8"/><path d="M918 758h8" stroke="#3d4c60" stroke-width="2"/>
<path d="M933 758.500h177" stroke="#8fa5bf" stroke-width="1"/><path d="M933 759.500h177" stroke="#f0f5fb"/>
<circle cx="1021" cy="758" r="5" fill="url(#kn)" stroke="#8ba0b8"/>
<circle cx="1120" cy="758" r="7.500" fill="url(#kn)" stroke="#8ba0b8"/><path d="M1116 758h8M1120 754v8" stroke="#3d4c60" stroke-width="2"/>
<path d="M1136 765h1M1139 765h1M1136 762h1M1139 762h1M1139 759h1" stroke="#f4f7fb" stroke-width="1.500"/>
</svg>
</body></html>
